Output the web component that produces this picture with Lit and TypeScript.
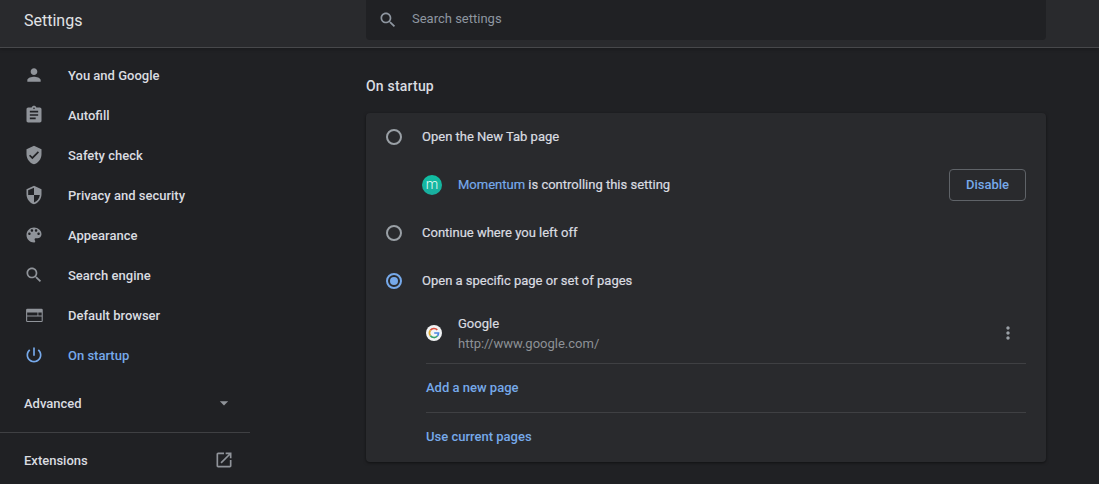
import { LitElement, html, css, svg } from "lit";
import { customElement } from "lit/decorators.js";

const ICONS: Record<string, string> = {
  person: "M12 12c2.21 0 4-1.79 4-4s-1.79-4-4-4-4 1.79-4 4 1.79 4 4 4zm0 2c-2.67 0-8 1.34-8 4v2h16v-2c0-2.66-5.33-4-8-4z",
  assignment: "M19 3h-4.18C14.4 1.84 13.3 1 12 1c-1.3 0-2.4.84-2.82 2H5c-1.1 0-2 .9-2 2v14c0 1.1.9 2 2 2h14c1.1 0 2-.9 2-2V5c0-1.1-.9-2-2-2zm-7 0c.55 0 1 .45 1 1s-.45 1-1 1-1-.45-1-1 .45-1 1-1zm2 14H7v-2h7v2zm3-4H7v-2h10v2zm0-4H7V7h10v2z",
  verified: "M12 1L3 5v6c0 5.55 3.84 10.74 9 12 5.16-1.26 9-6.45 9-12V5l-9-4zm-2 16l-4-4 1.41-1.41L10 14.17l6.59-6.59L18 9l-8 8z",
  security: "M12 1L3 5v6c0 5.55 3.84 10.74 9 12 5.16-1.26 9-6.45 9-12V5l-9-4zm0 10.99h7c-.53 4.12-3.28 7.79-7 8.94V12H5V6.3l7-3.11v8.8z",
  palette: "M12 3c-4.97 0-9 4.03-9 9s4.03 9 9 9c.83 0 1.5-.67 1.5-1.5 0-.39-.15-.74-.39-1.01-.23-.26-.38-.61-.38-.99 0-.83.67-1.5 1.5-1.5H16c2.76 0 5-2.24 5-5 0-4.42-4.03-8-9-8zm-5.5 9c-.83 0-1.5-.67-1.5-1.5S5.67 9 6.5 9 8 9.67 8 10.5 7.33 12 6.5 12zm3-4C8.67 8 8 7.33 8 6.5S8.67 5 9.5 5s1.5.67 1.5 1.5S10.33 8 9.5 8zm5 0c-.83 0-1.5-.67-1.5-1.5S13.67 5 14.5 5s1.5.67 1.5 1.5S15.33 8 14.5 8zm3 4c-.83 0-1.5-.67-1.5-1.5S16.67 9 17.5 9s1.5.67 1.5 1.5-.67 1.5-1.5 1.5z",
  search: "M15.5 14h-.79l-.28-.27C15.41 12.59 16 11.11 16 9.5 16 5.91 13.09 3 9.5 3S3 5.91 3 9.5 5.91 16 9.5 16c1.61 0 3.09-.59 4.23-1.57l.27.28v.79l5 4.99L20.49 19l-4.99-5zm-6 0C7.01 14 5 11.99 5 9.5S7.01 5 9.5 5 14 7.01 14 9.5 11.99 14 9.5 14z",
  web: "M4 4.5h17a1.5 1.5 0 0 1 1.5 1.5v13a1.5 1.5 0 0 1-1.5 1.5H4a1.5 1.5 0 0 1-1.5-1.5V6A1.5 1.5 0 0 1 4 4.5zM3.8 9v3.7h12.4V9zM17.2 9v3.7h4V9zM3.8 13.7V19.2h17.4v-5.5z",
  power: "M13 3h-2v10h2V3zm4.83 2.17l-1.42 1.42C17.99 7.86 19 9.81 19 12c0 3.87-3.13 7-7 7s-7-3.13-7-7c0-2.19 1.01-4.14 2.58-5.42L6.17 5.17C4.23 6.82 3 9.26 3 12c0 4.97 4.03 9 9 9s9-4.03 9-9c0-2.74-1.23-5.18-3.17-6.83z",
  open: "M19 19H5V5h7V3H5c-1.11 0-2 .9-2 2v14c0 1.1.89 2 2 2h14c1.1 0 2-.9 2-2v-7h-2v7zM14 3v2h3.59l-9.83 9.83 1.41 1.41L19 6.41V10h2V3h-7z",
  more: "M12 8c1.1 0 2-.9 2-2s-.9-2-2-2-2 .9-2 2 .9 2 2 2zm0 2c-1.1 0-2 .9-2 2s.9 2 2 2 2-.9 2-2-.9-2-2-2zm0 6c-1.1 0-2 .9-2 2s.9 2 2 2 2-.9 2-2-.9-2-2-2z",
  arrow: "M7 10l5 5 5-5z",
};

const icon = (name: string) =>
  html`<svg class="icon" viewBox="0 0 24 24" aria-hidden="true">${svg`<path d=${ICONS[name]}></path>`}</svg>`;

const NAV = [
  ["person", "You and Google"],
  ["assignment", "Autofill"],
  ["verified", "Safety check"],
  ["security", "Privacy and security"],
  ["palette", "Appearance"],
  ["search", "Search engine"],
  ["web", "Default browser"],
  ["power", "On startup"],
];

@customElement("app-root")
export class AppRoot extends LitElement {
  static styles = css`
    :host {
      display: block;
      height: 484px;
      overflow: hidden;
      background: #202124;
      color: #dadce0;
      font-family: Roboto, "Liberation Sans", sans-serif;
      font-size: 13px;
    }
    .header {
      height: 48px;
      box-sizing: border-box;
      display: flex;
      background: #292a2d;
      border-bottom: 1px solid #47484b;
      box-shadow: 0 2px 3px rgba(0, 0, 0, 0.18);
    }
    .title {
      width: 366px;
      box-sizing: border-box;
      padding: 11px 0 0 24px;
      font-size: 16px;
      line-height: 19px;
      font-weight: 400;
      color: #e1e3e6;
    }
    .search {
      width: 680px;
      height: 40px;
      box-sizing: border-box;
      display: flex;
      align-items: center;
      gap: 14px;
      padding-left: 12px;
      background: #202124;
      border-radius: 0 0 4px 4px;
      color: #8e96a0;
    }
    .search span {
      padding-bottom: 3px;
    }
    .icon {
      width: 20px;
      height: 20px;
      flex: none;
      fill: currentColor;
    }
    .body {
      display: flex;
    }
    .side {
      width: 250px;
      flex: none;
      padding-top: 7px;
      font-weight: 500;
    }
    .nav-item {
      height: 40px;
      display: flex;
      align-items: center;
      gap: 24px;
      padding-left: 24px;
      color: #dadce0;
    }
    .nav-item .icon {
      color: #90949a;
    }
    .nav-item.active,
    .nav-item.active .icon {
      color: #76a9ea;
    }
    .section {
      height: 40px;
      display: flex;
      align-items: center;
      justify-content: space-between;
      padding: 0 16px 0 24px;
    }
    .section .icon {
      color: #90949a;
    }
    .advanced {
      margin-top: 8px;
    }
    .sep {
      height: 1px;
      margin: 9px 0 7px;
      background: #3f4043;
    }
    .main {
      width: 680px;
      margin-left: 116px;
    }
    .heading {
      height: 65px;
      box-sizing: border-box;
      padding-top: 30px;
      font-size: 14px;
      line-height: 17px;
      font-weight: 500;
      letter-spacing: 0.2px;
      color: #dadce0;
    }
    .card {
      height: 349px;
      box-sizing: border-box;
      background: #292a2d;
      border-radius: 4px;
      box-shadow: 0 1px 3px rgba(0, 0, 0, 0.5);
    }
    .radio-row {
      height: 48px;
      display: flex;
      align-items: center;
      gap: 20px;
      padding-left: 20px;
    }
    .radio {
      width: 16px;
      height: 16px;
      box-sizing: border-box;
      flex: none;
      border: 2px solid #9aa0a6;
      border-radius: 50%;
      display: flex;
      align-items: center;
      justify-content: center;
    }
    .radio.on {
      border-color: #76a9ea;
    }
    .radio.on::after {
      content: "";
      width: 8px;
      height: 8px;
      border-radius: 50%;
      background: #76a9ea;
    }
    .label {
      font-weight: 400;
      -webkit-text-stroke: 0.2px currentColor;
    }
    .radio-row .label,
    .ext-text {
      padding-bottom: 2px;
    }
    .ext-row {
      height: 48px;
      display: flex;
      align-items: center;
      padding: 0 20px 0 56px;
    }
    .ext-logo {
      width: 20px;
      height: 20px;
      flex: none;
      margin-right: 16px;
      border-radius: 50%;
      background: linear-gradient(#10bfa3, #1aae9f);
      color: #e8fbf7;
      font-size: 14px;
      font-weight: 300;
      line-height: 18px;
      text-align: center;
    }
    .ext-text {
      flex: 1;
    }
    .link {
      color: #76a9ea;
    }
    .btn {
      width: 77px;
      height: 32px;
      box-sizing: border-box;
      display: flex;
      align-items: center;
      justify-content: center;
      padding-bottom: 1px;
      border: 1px solid #5f6368;
      border-radius: 4px;
      font-weight: 500;
      color: #76a9ea;
    }
    .page-row {
      height: 59px;
      margin-left: 60px;
      margin-right: 20px;
      display: flex;
      align-items: center;
      border-bottom: 1px solid #3f4043;
      box-sizing: border-box;
      padding-bottom: 3px;
    }
    .favicon {
      width: 16px;
      height: 16px;
      flex: none;
      margin-right: 16px;
    }
    .page-text {
      flex: 1;
      line-height: 20px;
      padding-top: 2px;
    }
    .page-url {
      color: #8d9196;
    }
    .kebab {
      width: 20px;
      height: 20px;
      margin-right: 8px;
      color: #9aa0a6;
      display: flex;
    }
    .action {
      margin: 0 20px 0 60px;
      height: 49px;
      display: flex;
      align-items: center;
      padding-bottom: 2px;
      font-weight: 500;
      color: #76a9ea;
      box-sizing: border-box;
    }
    .action.first {
      border-bottom: 1px solid #3f4043;
    }
  `;

  render() {
    return html`
      <div class="header">
        <div class="title">Settings</div>
        <div class="search">${icon("search")}<span>Search settings</span></div>
      </div>
      <div class="body">
        <nav class="side">
          ${NAV.map(
            ([i, t]) => html`<div class="nav-item ${t === "On startup" ? "active" : ""}">${icon(i)}<span>${t}</span></div>`
          )}
          <div class="section advanced"><span>Advanced</span>${icon("arrow")}</div>
          <div class="sep"></div>
          <div class="section"><span>Extensions</span>${icon("open")}</div>
        </nav>
        <main class="main">
          <div class="heading">On startup</div>
          <div class="card">
            <div class="radio-row"><span class="radio"></span><span class="label">Open the New Tab page</span></div>
            <div class="ext-row">
              <span class="ext-logo">m</span>
              <span class="ext-text label"><span class="link">Momentum</span> is controlling this setting</span>
              <span class="btn">Disable</span>
            </div>
            <div class="radio-row"><span class="radio"></span><span class="label">Continue where you left off</span></div>
            <div class="radio-row"><span class="radio on"></span><span class="label">Open a specific page or set of pages</span></div>
            <div class="page-row">
              <svg class="favicon" viewBox="0 0 16 16" aria-hidden="true">
                <circle cx="8" cy="8" r="8" fill="#f1f3f4"></circle>
                <path d="M11.3 4.9A4.5 4.5 0 0 0 4.4 5.3" fill="none" stroke="#d9503f" stroke-width="1.7"></path>
                <path d="M4.4 5.3A4.5 4.5 0 0 0 4.4 10.7" fill="none" stroke="#e0a92e" stroke-width="1.7"></path>
                <path d="M4.4 10.7A4.5 4.5 0 0 0 11.4 11" fill="none" stroke="#34a06a" stroke-width="1.7"></path>
                <path d="M11.4 11A4.5 4.5 0 0 0 12.5 8H8.2" fill="none" stroke="#4a86e0" stroke-width="1.7"></path>
              </svg>
              <div class="page-text"><div class="label">Google</div><div class="page-url">http://www.google.com/</div></div>
              <span class="kebab">${icon("more")}</span>
            </div>
            <div class="action first">Add a new page</div>
            <div class="action">Use current pages</div>
          </div>
        </main>
      </div>
    `;
  }
}
